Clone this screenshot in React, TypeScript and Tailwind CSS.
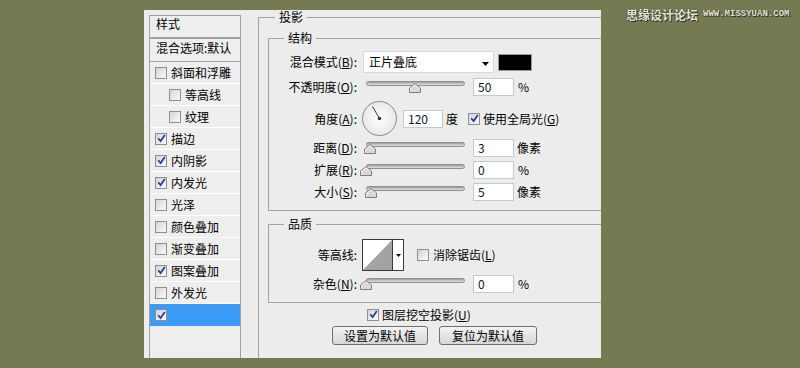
import React from "react";

const styleItems = [
    { label: "斜面和浮雕", on: false, indent: false },
    { label: "等高线", on: false, indent: true },
    { label: "纹理", on: false, indent: true },
    { label: "描边", on: true, indent: false },
    { label: "内阴影", on: true, indent: false },
    { label: "内发光", on: true, indent: false },
    { label: "光泽", on: false, indent: false },
    { label: "颜色叠加", on: false, indent: false },
    { label: "渐变叠加", on: false, indent: false },
    { label: "图案叠加", on: true, indent: false },
    { label: "外发光", on: false, indent: false },
];

function Check({ on }: { on?: boolean }) {
    return (
        <span className="inline-flex h-[12px] w-[12px] shrink-0 items-center justify-center border border-[#8e8f8f] bg-linear-to-br from-[#d4d4d4] to-[#fafafa]">
            {on && (
                <svg width="9" height="9" viewBox="0 0 9 9">
                    <path d="M1.2 4.2 L3.6 7 L7.8 1" fill="none" stroke="#26379a" strokeWidth="1.7" />
                </svg>
            )}
        </span>
    );
}

function Label({ text, k }: { text: string; k?: string }) {
    return (
        <span className="w-[88px] shrink-0 whitespace-nowrap text-right">
            {text}
            {k && (
                <>
                    (<span className="underline underline-offset-1">{k}</span>)
                </>
            )}
            :
        </span>
    );
}

function Field({ value, w = "w-[41px]" }: { value: string; w?: string }) {
    return (
        <span className={`${w} block h-[18px] shrink-0 border border-[#c3c8d0] bg-white pl-[4px] leading-[16px] text-[#141428]`}>
            {value}
        </span>
    );
}

// thumb centre, in px from the start of the track
function Slider({ pos }: { pos: number }) {
    return (
        <div className="relative ml-[5px] h-[18px] w-[104px] shrink-0">
            <div className="absolute left-[4px] top-[3px] h-[5px] w-[99px] rounded-full border border-[#8f8f8f] bg-linear-to-b from-[#9c9c9c] to-[#e4e4e4]" />
            <svg className="absolute top-[5px]" style={{ left: pos - 2 }} width="12" height="10" viewBox="0 0 12 10">
                <path d="M0.5 9.5 V5 L6 0.7 L11.5 5 V9.5 Z" fill="#d8d8d8" stroke="#7d7d7d" />
                <path d="M1.5 8.5 V5.4 L6 1.9 L10.5 5.4" fill="none" stroke="#f4f4f4" />
            </svg>
        </div>
    );
}

function Dial() {
    return (
        <div className="ml-[5px] h-[35px] w-[35px] shrink-0 rounded-full border border-[#8a8a8a] bg-radial from-[#ffffff] to-[#e0e0e0]">
            <svg width="33" height="33" viewBox="0 0 33 33">
                <line x1="16.5" y1="16.5" x2="9.5" y2="4.5" stroke="#3a3a3a" strokeWidth="1" />
                <circle cx="16.5" cy="16.5" r="1.8" fill="#3a3a3a" />
            </svg>
        </div>
    );
}

function Btn({ children }: { children: React.ReactNode }) {
    return (
        <span className="flex h-[19px] items-center justify-center rounded-[3px] border border-[#707070] bg-linear-to-b from-[#f4f4f4] to-[#d6d6d6] text-[12px]">
            {children}
        </span>
    );
}

export default function App() {
    return (
        <div className="relative h-[368px] w-[800px] overflow-hidden bg-[#767a53] font-['Noto_Sans_CJK_SC','Noto_Sans',sans-serif] text-[12px] text-black">
            {/* watermark */}
            <div className="absolute left-[626px] top-[6px] flex items-center gap-[5px] whitespace-nowrap">
                <span className="text-[12px] font-bold text-[#e4e6d4] [text-shadow:0_0_1px_#222,1px_1px_0_#333]">思缘设计论坛</span>
                <span className="font-['Liberation_Mono',monospace] text-[9px] font-bold text-[#e4e6d4] [text-shadow:0_0_1px_#222,1px_1px_0_#333]">WWW.MISSYUAN.COM</span>
            </div>

            <div className="ml-[144px] mt-[10px] flex h-[348px] w-[457px] bg-[#ececec] pl-[5px]">
                {/* style list */}
                <div className="mt-[5px] h-[343px] w-[92px] shrink-0 border border-b-0 border-[#a0a0a0] bg-[#eeeeee]">
                    <div className="h-[23px] border-b-2 border-[#a0a0a0] pl-[6px] leading-[15px]">样式</div>
                    <div className="h-[23px] overflow-hidden whitespace-nowrap border-b border-[#a0a0a0] pl-[6px] leading-[18px]">混合选项:默认</div>
                    {styleItems.map((it) => (
                        <div
                            key={it.label}
                            className={`flex h-[22px] items-center border-b border-white ${it.indent ? "pl-[19px]" : "pl-[5px]"}`}
                        >
                            <Check on={it.on} />
                            <span className="ml-[4px] whitespace-nowrap">{it.label}</span>
                        </div>
                    ))}
                    <div className="flex h-[22px] items-center bg-[#3d9bf8] pl-[5px]">
                        <Check on />
                    </div>
                </div>

                {/* 投影 */}
                <fieldset className="ml-[17px] h-[348px] w-[343px] shrink-0 border border-r-0 border-b-0 border-[#a3a3a3] pl-[9px] pt-[7px]">
                    <legend className="ml-[7px] px-[4px] leading-[14px]">投影</legend>

                    <fieldset className="w-[333px] border border-r-0 border-[#a3a3a3] pb-[9px]">
                        <legend className="ml-[15px] px-[4px] leading-[14px]">结构</legend>

                        <div className="mt-[6px] flex h-[22px] items-center">
                            <Label text="混合模式" k="B" />
                            <div className="relative ml-[6px] flex h-[22px] w-[131px] items-center border border-[#dadada] bg-white pl-[5px]">
                                正片叠底
                                <svg className="absolute right-[4px] top-[10px]" width="7" height="4" viewBox="0 0 7 4">
                                    <path d="M0 0 H7 L3.5 4 Z" fill="#000" />
                                </svg>
                            </div>
                            <span className="ml-[4px] h-[17px] w-[34px] border border-[#9a9a9a] bg-black" />
                        </div>

                        <div className="mt-[5px] flex h-[18px] items-center">
                            <Label text="不透明度" k="O" />
                            <Slider pos={49} />
                            <span className="ml-[7px] flex"><Field value="50" /></span>
                            <span className="ml-[4px]">%</span>
                        </div>

                        <div className="mt-[5px] flex h-[35px] items-center">
                            <Label text="角度" k="A" />
                            <Dial />
                            <span className="ml-[6px] flex"><Field value="120" w="w-[40px]" /></span>
                            <span className="ml-[3px]">度</span>
                            <span className="ml-[10px] flex"><Check on /></span>
                            <span className="ml-[3px] whitespace-nowrap">
                                使用全局光(<span className="underline underline-offset-1">G</span>)
                            </span>
                        </div>

                        <div className="mt-[3px] flex h-[18px] items-center">
                            <Label text="距离" k="D" />
                            <Slider pos={4} />
                            <span className="ml-[7px] flex"><Field value="3" /></span>
                            <span className="ml-[3px]">像素</span>
                        </div>

                        <div className="mt-[4px] flex h-[18px] items-center">
                            <Label text="扩展" k="R" />
                            <Slider pos={0} />
                            <span className="ml-[7px] flex"><Field value="0" /></span>
                            <span className="ml-[4px]">%</span>
                        </div>

                        <div className="mt-[4px] flex h-[18px] items-center">
                            <Label text="大小" k="S" />
                            <Slider pos={5} />
                            <span className="ml-[7px] flex"><Field value="5" /></span>
                            <span className="ml-[3px]">像素</span>
                        </div>
                    </fieldset>

                    <fieldset className="mt-[6px] w-[333px] border border-r-0 border-[#a3a3a3] pb-[9px]">
                        <legend className="ml-[15px] px-[4px] leading-[14px]">品质</legend>

                        <div className="mt-[8px] flex h-[32px] items-center">
                            <Label text="等高线" />
                            <div className="ml-[5px] flex h-[32px] w-[42px] border border-[#3a3a3a] bg-white">
                                <svg width="29" height="30" viewBox="0 0 29 30">
                                    <path d="M0 30 L29 0 V30 Z" fill="#a3a3a3" />
                                </svg>
                                <div className="flex w-[11px] items-center justify-center border-l border-[#3a3a3a]">
                                    <svg width="5" height="3" viewBox="0 0 5 3">
                                        <path d="M0 0 H5 L2.5 3 Z" fill="#000" />
                                    </svg>
                                </div>
                            </div>
                            <span className="ml-[13px] flex"><Check /></span>
                            <span className="ml-[4px] whitespace-nowrap">
                                消除锯齿(<span className="underline underline-offset-1">L</span>)
                            </span>
                        </div>

                        <div className="mt-[4px] flex h-[18px] items-center">
                            <Label text="杂色" k="N" />
                            <Slider pos={0} />
                            <span className="ml-[7px] flex"><Field value="0" /></span>
                            <span className="ml-[4px]">%</span>
                        </div>
                    </fieldset>

                    <div className="mt-[5px] flex h-[13px] items-center pl-[99px]">
                        <Check on />
                        <span className="ml-[3px] whitespace-nowrap">
                            图层挖空投影(<span className="underline underline-offset-1">U</span>)
                        </span>
                    </div>

                    <div className="mt-[5px] flex pl-[64px]">
                        <span className="w-[96px]"><Btn>设置为默认值</Btn></span>
                        <span className="ml-[11px] w-[98px]"><Btn>复位为默认值</Btn></span>
                    </div>
                </fieldset>
            </div>
        </div>
    );
}
